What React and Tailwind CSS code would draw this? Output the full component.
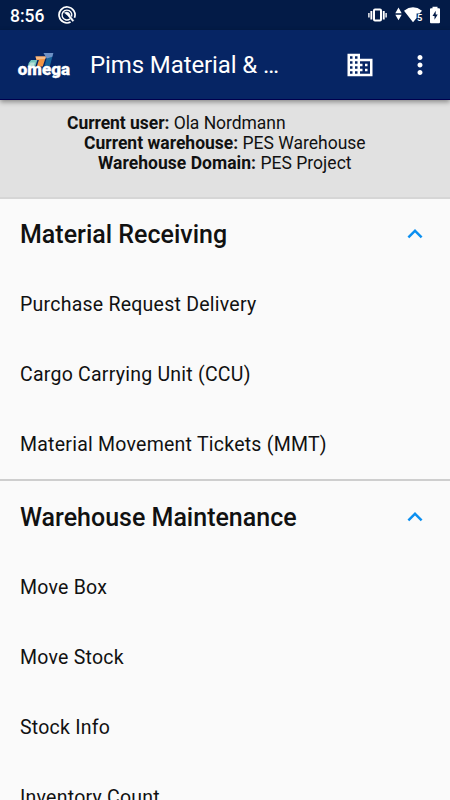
import { MdBusiness, MdMoreVert, MdKeyboardArrowUp } from "react-icons/md";

function StatusBar() {
  return (
    <div className="flex h-[30px] shrink-0 items-center bg-[#031b47] pl-[10px] text-white">
      <span className="w-[36px] whitespace-nowrap text-[17.5px] leading-[30px] font-medium pt-[2px]">8:56</span>
      <svg className="ml-[12px]" width="18" height="18" viewBox="0 0 18 18" fill="none" stroke="#fff">
        <path d="M12.6 16.1A8 8 0 1 1 16.5 11.8" strokeWidth="1.7" />
        <path d="M12 12.9A4.9 4.9 0 1 1 13.6 10.6" strokeWidth="1.4" />
        <path d="M6.4 6.8C8.8 5 12 6.6 12.4 10.2L15.8 14.6L14.6 15.4L9.6 9.4Z" fill="#fff" strokeWidth=".5" />
      </svg>
      <svg className="ml-auto" width="82" height="30" viewBox="368 0 82 30" fill="#fff">
        <rect x="374" y="9.6" width="7" height="11" rx="1" fill="none" stroke="#fff" strokeWidth="2" />
        <path d="M370.4 11h1.9v8.5h-1.9zM368.2 13h1.4v4.6h-1.4zM382.8 11h1.9v8.5h-1.9zM385.4 13h1.4v4.6h-1.4z" />
        <path d="M398.5 7.6l3.2 5.7h-6.4zM398.5 20.3l-3.2-5.5h6.4z" />
        <path d="M404 10.7Q413 3.8 422 10.7L419.6 13.6H416.6V18L413 22.2z" />
        <text x="417" y="20.8" fontSize="9.4" fontWeight="700">5</text>
        <path d="M430 9.2q0-1 1-1h1.5V6.7h5v1.5h1.5q1 0 1 1v13q0 1-1 1h-8q-1 0-1-1z" />
        <path d="M435.7 10.8l-3.2 5.1h2v3.8l3.2-5.3h-2z" fill="#031b47" />
      </svg>
    </div>
  );
}

function OmegaLogo() {
  return (
    <svg width="54" height="30" viewBox="17 49 54 30">
      <path d="M31 59h6.3l-2 6.5h-7.5q.2-3.7 3.2-6.5z" fill="#74c5bd" />
      <path d="M30.5 61.5h4.5l-1.4 4h-5.1z" fill="#b8dfd6" />
      <path d="M35.5 55.5H46l-3.3 10H36.8l2.1-6.5h-2.5z" fill="#f39542" />
      <path d="M35.5 55.5H46l-.8 2.4-8.7.7z" fill="#f9bb84" />
      <path d="M43.5 52h9.8l-3.5 13.5h-5.5l2.7-9.5z" fill="#17659b" />
      <path d="M43.5 52h9.8l-1 3.8-5.6 1.7z" fill="#6e91c5" />
      <text x="17.8" y="74.2" textLength="52.2" lengthAdjust="spacingAndGlyphs" fontSize="16.6" fontWeight="900" fill="#fff" stroke="#fff" strokeWidth=".3">omega</text>
    </svg>
  );
}

function AppBar() {
  return (
    <header className="relative z-10 flex h-[70px] shrink-0 items-center border-b border-[#00004e] bg-[#062564] pl-[17px] text-white shadow-[0_2px_5px_rgba(0,0,0,0.4)]">
      <OmegaLogo />
      <h1 className="ml-[19px] w-[255px] pt-[1px] whitespace-nowrap text-[24px] leading-[30px] font-normal tracking-[-0.1px]">Pims Material &amp; …</h1>
      <MdBusiness size={30} />
      <MdMoreVert size={30} className="ml-[30px]" />
    </header>
  );
}

function InfoLine({ label, value, indent }) {
  return (
    <p className={`${indent} whitespace-nowrap`}>
      <span className="font-bold">{label}</span> {value}
    </p>
  );
}

function Section({ title, items, divided }) {
  return (
    <section className={divided ? "border-t-2 border-[#cecece] pt-[0.5px]" : ""}>
      <div className="flex h-[70px] items-center justify-between pr-5 pl-5">
        <h2 className="pt-[2px] text-[25px] leading-[30px] font-medium">{title}</h2>
        <MdKeyboardArrowUp size={30} className="text-[#0b8ff0]" />
      </div>
      {items.map((item) => (
        <div key={item} className="flex h-[70px] items-center pt-[1.5px] pl-5 text-[19.5px] tracking-[0.24px]">{item}</div>
      ))}
    </section>
  );
}

export default function App() {
  return (
    <main className="flex h-[800px] w-[450px] flex-col overflow-hidden bg-[#fafafa] font-['Roboto',sans-serif] text-[#111]">
      <StatusBar />
      <AppBar />
      <div className="h-[99px] shrink-0 border-b-2 border-[#d6d6d6] bg-[#e1e1e1] pt-[13px] text-[17.5px] leading-[20px]">
        <InfoLine label="Current user:" value="Ola Nordmann" indent="pl-[67px] tracking-[-0.05px]" />
        <InfoLine label="Current warehouse:" value="PES Warehouse" indent="pl-[84px]" />
        <InfoLine label="Warehouse Domain:" value="PES Project" indent="pl-[98px] tracking-[0.03px]" />
      </div>
      <Section title="Material Receiving" items={["Purchase Request Delivery", "Cargo Carrying Unit (CCU)", "Material Movement Tickets (MMT)"]} />
      <Section title="Warehouse Maintenance" divided items={["Move Box", "Move Stock", "Stock Info", "Inventory Count"]} />
    </main>
  );
}
